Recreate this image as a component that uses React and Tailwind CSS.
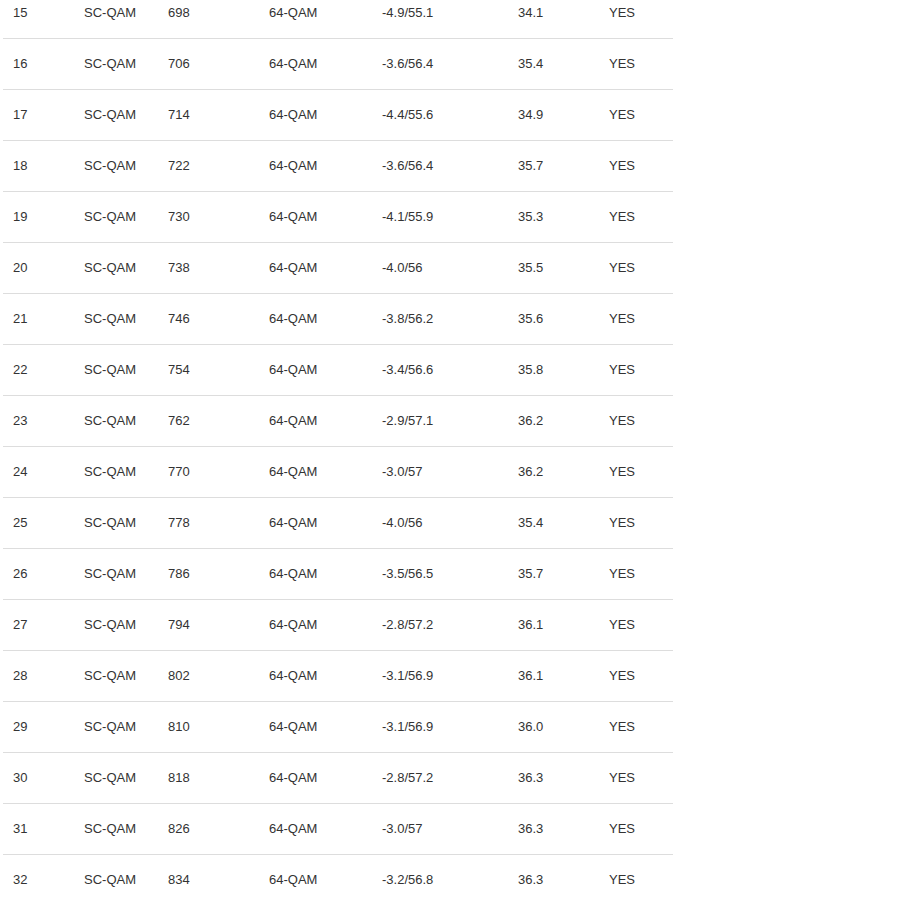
const rows = [
  ['15', '698', '-4.9/55.1', '34.1'],
  ['16', '706', '-3.6/56.4', '35.4'],
  ['17', '714', '-4.4/55.6', '34.9'],
  ['18', '722', '-3.6/56.4', '35.7'],
  ['19', '730', '-4.1/55.9', '35.3'],
  ['20', '738', '-4.0/56', '35.5'],
  ['21', '746', '-3.8/56.2', '35.6'],
  ['22', '754', '-3.4/56.6', '35.8'],
  ['23', '762', '-2.9/57.1', '36.2'],
  ['24', '770', '-3.0/57', '36.2'],
  ['25', '778', '-4.0/56', '35.4'],
  ['26', '786', '-3.5/56.5', '35.7'],
  ['27', '794', '-2.8/57.2', '36.1'],
  ['28', '802', '-3.1/56.9', '36.1'],
  ['29', '810', '-3.1/56.9', '36.0'],
  ['30', '818', '-2.8/57.2', '36.3'],
  ['31', '826', '-3.0/57', '36.3'],
  ['32', '834', '-3.2/56.8', '36.3'],
];

const App = () => {
  return (
    <div className="h-[904px] overflow-hidden bg-white">
      <table
        className="ml-[3px] -mt-[13px] w-[670px] border-collapse text-[13px] text-[#333]"
        style={{ fontFamily: '"Liberation Sans", Arial, sans-serif' }}
      >
        <colgroup>
          <col className="w-[71px]" />
          <col className="w-[84px]" />
          <col className="w-[101px]" />
          <col className="w-[113px]" />
          <col className="w-[136px]" />
          <col className="w-[91px]" />
          <col className="w-[74px]" />
        </colgroup>
        <tbody>
          {rows.map(([ch, freq, power, snr]) => (
            <tr key={ch} className="h-[51px] border-b border-[#ddd]">
              <td className="px-[10px] align-middle">{ch}</td>
              <td className="px-[10px] align-middle">SC-QAM</td>
              <td className="px-[10px] align-middle">{freq}</td>
              <td className="px-[10px] align-middle">64-QAM</td>
              <td className="px-[10px] align-middle">{power}</td>
              <td className="px-[10px] align-middle">{snr}</td>
              <td className="px-[10px] align-middle">YES</td>
            </tr>
          ))}
        </tbody>
      </table>
    </div>
  );
};

export default App;
